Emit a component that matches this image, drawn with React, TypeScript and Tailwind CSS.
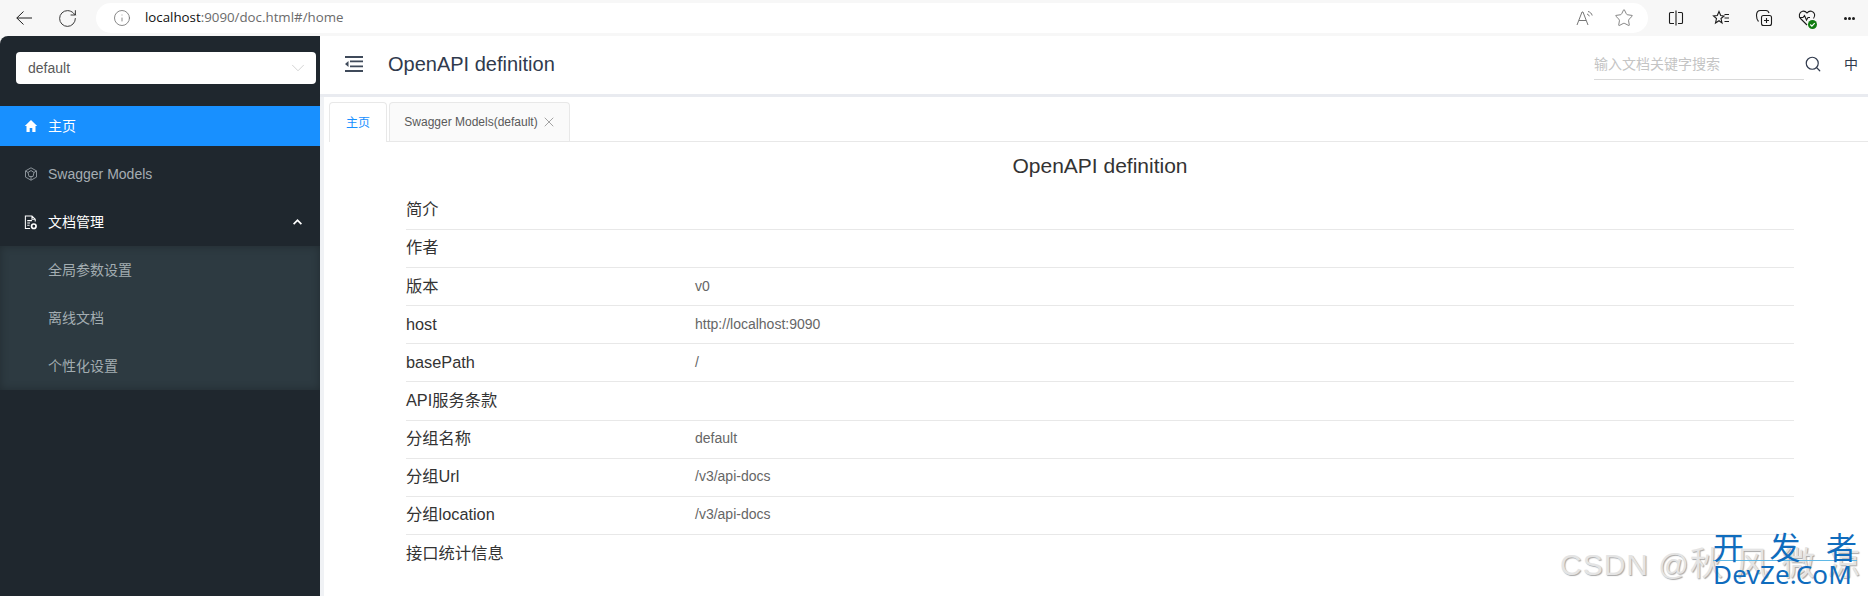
import { ChevronDown, Info, RotateCw, Search, Star, X } from "lucide-react";

const sans = "font-['Liberation_Sans','Noto_Sans_CJK_SC',sans-serif]";

const rows = [
  { label: "简介", value: "" },
  { label: "作者", value: "" },
  { label: "版本", value: "v0" },
  { label: "host", value: "http://localhost:9090" },
  { label: "basePath", value: "/" },
  { label: "API服务条款", value: "" },
  { label: "分组名称", value: "default" },
  { label: "分组Url", value: "/v3/api-docs" },
  { label: "分组location", value: "/v3/api-docs" },
  { label: "接口统计信息", value: "" },
];

function BrowserToolbar() {
  return (
    <div className="flex h-9 shrink-0 items-center">
      <div className="flex w-[96px] shrink-0 items-center text-[#1f1f1f]">
        <svg viewBox="0 0 16 16" className="ml-[16px] h-4 w-4" fill="none" stroke="currentColor" strokeWidth="1">
          <path d="M16 8H.8M7.500 1.500.8 8l6.700 6.500" />
        </svg>
        <RotateCw className="ml-[25px] h-[21px] w-[21px]" strokeWidth={1} />
      </div>
      <div className="flex h-[30px] w-[1552px] items-center rounded-full bg-white">
        <Info className="ml-[17px] h-[18px] w-[18px] text-[#707070]" strokeWidth={1.1} />
        <div className="ml-[14px] flex-1 font-['Open_Sans',sans-serif] text-[13.3px] text-[#6b6b6b]">
          <span className="text-[#111]">localhost</span>:9090/doc.html#/home
        </div>
        <svg viewBox="0 0 18 16" className="mr-[20px] h-[16px] w-[18px] text-[#777]" fill="none" stroke="currentColor" strokeWidth="1">
          <path d="M1 15 6 2h1l5 13M3 10.500h7" />
          <path d="M11 4c1.200.3 2 1.100 2.300 2.300M12 1.500c2.200.5 3.600 1.900 4.200 4" />
        </svg>
        <Star className="mr-[14px] h-[20px] w-[20px] text-[#6e6e6e]" strokeWidth={1} />
      </div>
      <div className="ml-[20px] flex items-center text-[#1c1c1c]">
        <svg viewBox="0 0 16 16" className="h-4 w-4" fill="none" stroke="currentColor" strokeWidth="1.100">
          <path d="M6 2.500H2.500a1 1 0 0 0-1 1v9a1 1 0 0 0 1 1H6M10 2.500h3.500a1 1 0 0 1 1 1v9a1 1 0 0 1-1 1H10M8 .5v15" />
        </svg>
        <svg viewBox="0 0 18 16" className="ml-[28px] h-4 w-[18px]" fill="none" stroke="currentColor" strokeWidth="1.100">
          <path d="M7 1.500 8.700 5.500 12 6 9 8.500l1 4.500-3-2.300L3.500 13l1-4.500L1.500 6l3.800-.5Z" />
          <path d="M12.500 4.500H17M12.500 8H17M12.500 11.500H17" />
        </svg>
        <svg viewBox="0 0 18 18" className="ml-[25px] h-[18px] w-[18px]" fill="none" stroke="currentColor" strokeWidth="1.100">
          <path d="M3.500 12.500C2 11 1.500 9 1.500 6.500 1.500 3 3 1.500 5.500 1.500h5.500c1.500 0 2.500.8 3 2.500" />
          <rect x="6.500" y="6.500" width="10" height="10" rx="2" />
          <path d="M11.500 9v5M9 11.500h5" />
        </svg>
        <div className="relative ml-[25px] h-[18px] w-[18px]">
          <svg viewBox="0 0 18 18" className="h-[18px] w-[18px]" fill="none" stroke="currentColor" strokeWidth="1.100">
            <path d="M9 16 2.500 9.500C.5 7.500 1 3 4.500 2.200 6.500 1.800 8 2.700 9 4c1-1.300 2.500-2.200 4.500-1.800C17 3 17.500 7 15.500 9.500" />
            <path d="M1.500 8.500h3.500l1.500-2 2 4.500 1.500-2.500h2" />
          </svg>
          <span className="absolute -bottom-[2px] -right-[1px] flex h-[9px] w-[9px] items-center justify-center rounded-full bg-[#107c10]">
            <svg viewBox="0 0 8 8" className="h-[7px] w-[7px]" fill="none" stroke="white" strokeWidth="1.300">
              <path d="M1.500 4 3.300 5.800 6.500 2.500" />
            </svg>
          </span>
        </div>
        <div className="ml-[28px] flex gap-[1px]">
          <span className="h-[3px] w-[3px] rounded-full bg-[#1c1c1c]" />
          <span className="h-[3px] w-[3px] rounded-full bg-[#1c1c1c]" />
          <span className="h-[3px] w-[3px] rounded-full bg-[#1c1c1c]" />
        </div>
      </div>
    </div>
  );
}

function Sidebar() {
  return (
    <aside className="flex w-[320px] shrink-0 flex-col rounded-tl-[8px] bg-[#1f272e] pt-4 text-sm">
      <div className="mx-4 flex h-8 w-[300px] items-center justify-between rounded-[4px] bg-white pl-3 pr-[7px] text-[#595959]">
        default
        <ChevronDown className="h-[22px] w-[22px] text-[#c4c4c4]" strokeWidth={0.8} />
      </div>
      <div className="mt-[22px] flex h-10 items-center bg-[#1890ff] pl-6 text-white">
        <svg viewBox="0 0 14 14" className="h-[14px] w-[14px]" fill="currentColor">
          <path d="M7 1 .8 7h1.700v6h3.200V9h2.600v4h3.200V7h1.700Z" />
        </svg>
        <span className="ml-[10px]">主页</span>
      </div>
      <div className="mt-2 flex h-10 items-center pl-6 text-[#a5adb3]">
        <svg viewBox="0 0 14 14" className="h-[14px] w-[14px] text-[#8b9399]" fill="none" stroke="currentColor" strokeWidth="1">
          <path d="M7 .8 12.500 3.900V10.100L7 13.200 1.500 10.100V3.900Z" />
          <path d="M7 3.500 10 5.500 9 9.500H5L4 5.500ZM1.500 3.900 4 5.500M12.500 3.900 10 5.500M7 13.200V9.500" />
        </svg>
        <span className="ml-[10px]">Swagger Models</span>
      </div>
      <div className="mt-2 flex h-10 items-center pl-6 pr-[18px] text-white">
        <svg viewBox="0 0 14 16" className="h-[15px] w-[14px]" fill="none" stroke="currentColor" strokeWidth="1.100">
          <path d="M6 14.500H1V1h7l3.500 3.500V7M8 1v3.500h3.500M3 6h5M3 8.500h3M3 11h2.500" />
          <circle cx="10" cy="12" r="2.400" strokeWidth="1.800" />
        </svg>
        <span className="ml-[10px] flex-1">文档管理</span>
        <svg viewBox="0 0 9 6" className="h-[6px] w-[9px]" fill="currentColor">
          <path d="M4.500 0 9 4.500 7.800 5.800 4.500 2.600 1.200 5.800 0 4.500Z" />
        </svg>
      </div>
      <div className="mt-[4px] flex flex-col bg-[#2d3a41] pl-12 text-[#a3adb1] shadow-[inset_0_0_8px_rgba(0,0,0,0.25)]">
        <div className="flex h-12 items-center">全局参数设置</div>
        <div className="flex h-12 items-center">离线文档</div>
        <div className="flex h-12 items-center">个性化设置</div>
      </div>
    </aside>
  );
}

function Tabs() {
  return (
    <div className="ml-[5px] mt-[5px] flex h-[40px] shrink-0 items-end gap-[2px] border-b border-[#e8e8e8] text-xs">
      <div className="-mb-px flex h-[40px] w-[58px] items-center justify-center rounded-t-[4px] border border-b-0 border-[#e8e8e8] bg-white text-[#1890ff]">
        主页
      </div>
      <div className="flex h-[39px] w-[181px] items-center justify-center gap-[3px] rounded-t-[4px] border border-b-0 border-[#e8e8e8] bg-[#fafafa] pl-[2px] text-[#595959]">
        Swagger Models(default)
        <X className="h-[16px] w-[16px] text-[#777]" strokeWidth={1} />
      </div>
    </div>
  );
}

function Watermark() {
  return (
    <div className="pointer-events-none absolute bottom-0 right-0 h-[71px] w-[318px] overflow-hidden">
      <div className="absolute left-[10px] top-[22px] whitespace-nowrap text-[30px] leading-[34px] tracking-[1px] text-[#e4e4e4] [text-shadow:1px_1px_1px_#a8a8a8]">
        CSDN @<span className="text-[33px] tracking-[13px]">秋风微凉</span>
      </div>
      <div className="absolute left-[163px] top-[5px] w-[144px] text-[#0f6cbd]">
        <div className="flex h-[31px] justify-between border-b border-[#5fb8e6] text-[31px] leading-[38px]">
          <span>开</span>
          <span>发</span>
          <span>者</span>
        </div>
        <div className="whitespace-nowrap font-['Noto_Sans',sans-serif] text-[26px] leading-[27px] tracking-[0.2px]">DevZe.CoM</div>
      </div>
    </div>
  );
}

export default function App() {
  return (
    <div className={`relative flex h-[596px] w-[1868px] flex-col overflow-hidden bg-[#f7f7f7] ${sans}`}>
      <BrowserToolbar />
      <div className="flex min-h-0 flex-1">
        <Sidebar />
        <main className="flex min-w-0 flex-1 flex-col bg-white">
          <header className="flex h-[61px] shrink-0 items-center border-b-[3px] border-[#e9ebf0] pb-[2px]">
            <svg viewBox="0 0 18 16" className="ml-[25px] h-4 w-[18px] text-[#3f4a5a]" fill="currentColor">
              <path d="M0 0h18v2H0zM5 4.500h13v1.800H5zM5 9.500h13v1.800H5zM0 14h18v2H0zM3.500 5v6L0 8z" />
            </svg>
            <h1 className="ml-[25px] flex-1 text-[20px] text-[#303a4d]">OpenAPI definition</h1>
            <div className="flex h-[32px] w-[210px] items-center border-b border-[#dadada] pt-[1px] text-sm text-[#c4c4c4]">
              输入文档关键字搜索
            </div>
            <Search className="mr-[22px] h-[18px] w-[18px] text-[#303a4d]" strokeWidth={1.6} />
            <span className="mr-[10px] text-[14px] text-[#303a4d]">中</span>
          </header>
          <div className="flex min-h-0 flex-1 bg-[#f0f2f5] pl-1">
            <div className="flex min-w-0 flex-1 flex-col bg-white">
              <Tabs />
              <div className="ml-[82px] mr-[74px]">
                <h2 className="mb-[12px] mt-[10px] text-center text-[21px] leading-[28px] text-[#333]">OpenAPI definition</h2>
                {rows.map((row, index) => (
                  <div
                    key={row.label}
                    className={`flex h-[38.1px] items-center pb-[2px] ${index < rows.length - 1 ? "border-b border-[#e8e8e8]" : ""}`}
                  >
                    <div className="w-[289px] text-[16.3px] text-[#333]">{row.label}</div>
                    <div className="text-sm text-[#666]">{row.value}</div>
                  </div>
                ))}
              </div>
            </div>
          </div>
        </main>
      </div>
      <Watermark />
    </div>
  );
}
